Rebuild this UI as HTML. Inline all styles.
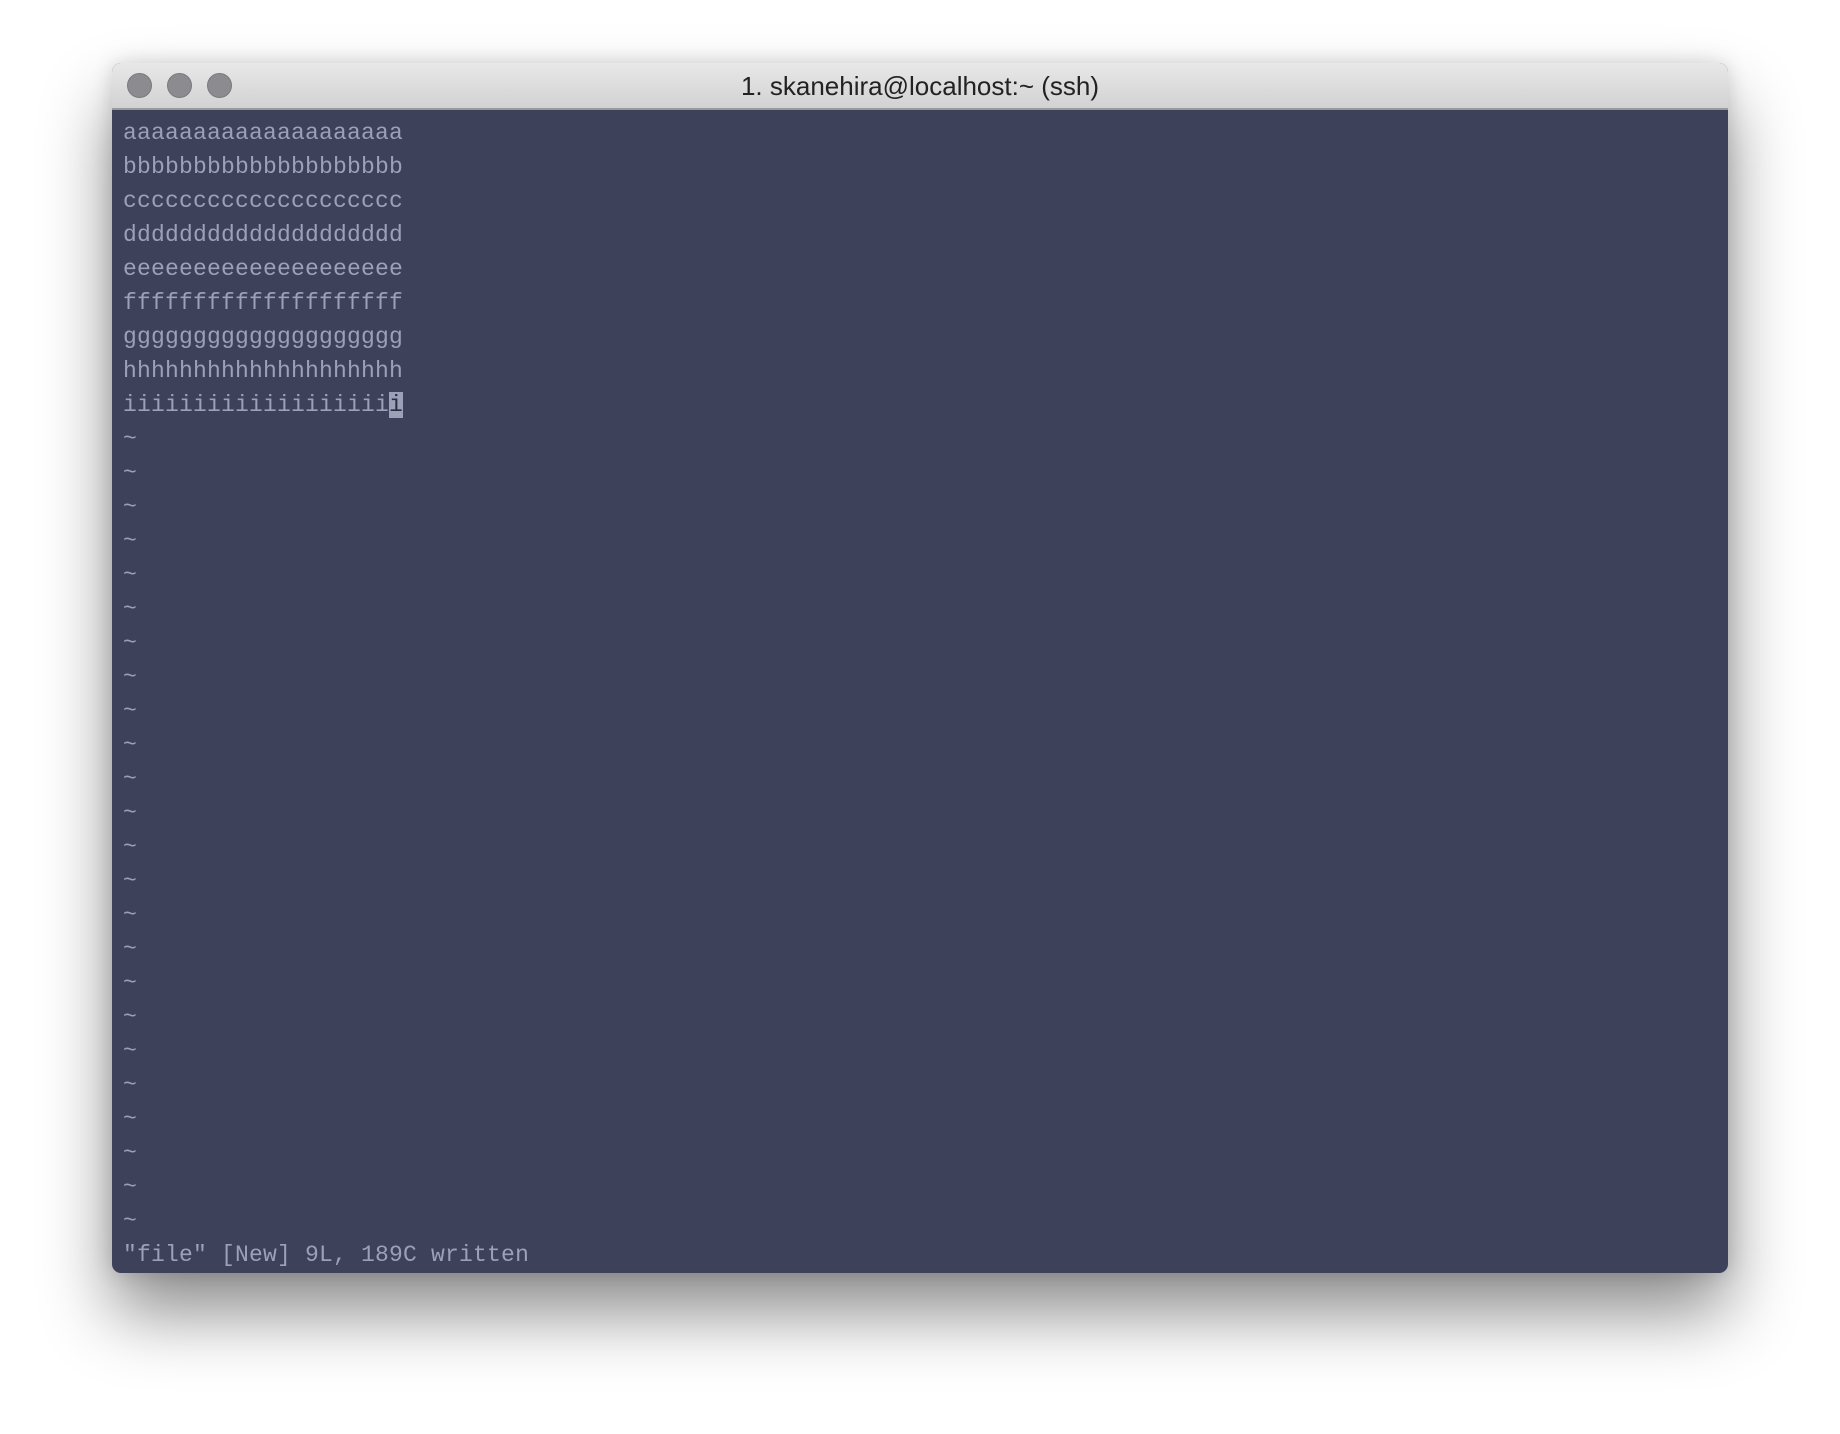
<!DOCTYPE html>
<html><head><meta charset="utf-8"><style>
html,body{margin:0;padding:0;width:1840px;height:1434px;background:#fff;overflow:hidden}
.win{position:absolute;left:112px;top:63px;width:1616px;height:1210px;border-radius:9px;overflow:hidden;background:#3d4159;box-shadow:0 40px 70px rgba(0,0,0,.45),0 0 20px rgba(0,0,0,.15)}
.tb{position:absolute;left:0;top:0;width:100%;height:45px;background:linear-gradient(#e8e8e8,#d2d2d2);border-bottom:2px solid #9a9a9a}
.dot{position:absolute;top:10px;width:25px;height:25px;border-radius:50%;background:#8c8c90;border:1px solid #7a7a7e;box-sizing:border-box}
.title{position:absolute;left:0;right:0;top:8px;line-height:47px;text-align:center;font:26px "Liberation Sans",sans-serif;color:#222}
.txt{position:absolute;left:11px;top:53px;font:23px/34px "Liberation Mono",monospace;letter-spacing:0.2px;color:#9ba1b9;white-space:pre}
.cur{background:#9ba1b9;color:#2a2d3e}
</style></head><body>
<div class="win">
<div class="tb"><div class="dot" style="left:15px"></div><div class="dot" style="left:55px"></div><div class="dot" style="left:95px"></div>
<div class="title">1. skanehira@localhost:~ (ssh)</div></div>
<div class="txt">aaaaaaaaaaaaaaaaaaaa
bbbbbbbbbbbbbbbbbbbb
cccccccccccccccccccc
dddddddddddddddddddd
eeeeeeeeeeeeeeeeeeee
ffffffffffffffffffff
gggggggggggggggggggg
hhhhhhhhhhhhhhhhhhhh
iiiiiiiiiiiiiiiiiii<span class="cur">i</span>
~
~
~
~
~
~
~
~
~
~
~
~
~
~
~
~
~
~
~
~
~
~
~
~
"file" [New] 9L, 189C written</div>
</div>
</body></html>
